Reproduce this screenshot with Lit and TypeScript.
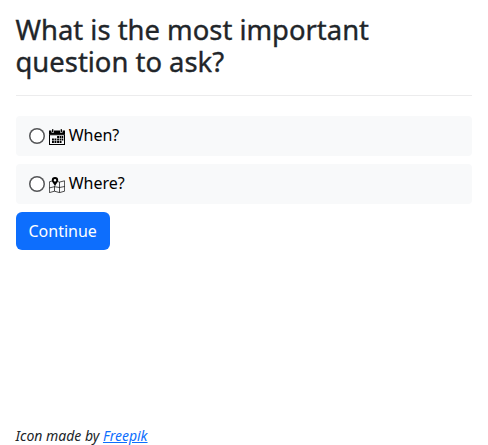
import { LitElement, html, css, svg } from "lit";
import { customElement } from "lit/decorators.js";

const calendar = svg`
  <path d="M0 1.6h2.4v1.2a1.3 1.3 0 0 0 2.6 0V1.6h6v1.2a1.3 1.3 0 0 0 2.6 0V1.6H16v4H0z"/>
  <rect x="3" y="0" width="1.4" height="3.5" rx=".7"/>
  <rect x="11.6" y="0" width="1.4" height="3.5" rx=".7"/>
  <path fill-rule="evenodd" d="M0 5.2h16V16H0zM1 6.3V15h14V6.3z"/>
  <path d="M8.1 7h1.9v1.9H8.1zM10.6 7h1.9v1.9h-1.9zM13 7h1.3v1.9H13zM3 9.5h1.9v1.9H3zM5.5 9.5h1.9v1.9H5.5zM8.1 9.5h1.9v1.9H8.1zM10.6 9.5h1.9v1.9h-1.9zM13 9.5h1.3v1.9H13zM3 12h1.9v1.9H3zM5.5 12h1.9v1.9H5.5zM8.1 12h1.9v1.9H8.1zM10.6 12h1.9v1.9h-1.9z"/>`;

const map = svg`
  <path fill-rule="evenodd" d="M6 0a3.2 3.2 0 0 1 3.2 3.2C9.2 5.2 7 6.8 6 9.2 5 6.8 2.8 5.2 2.8 3.2A3.2 3.2 0 0 1 6 0zM6 1.9a1.3 1.3 0 1 0 0 2.6 1.3 1.3 0 0 0 0-2.6z"/>
  <path fill="none" stroke="#000" stroke-width=".7" d="M3 4L.4 4.8v10.8L5.5 14.2l5 1.4 5.1-1.4V3.8l-5.1 1.3-1.6-.5M5.5 9.2v5M10.5 5.1v10.5M.4 10.9l5.1-1.2 5 .8 5.1-1"/>`;

@customElement("app-root")
export class AppRoot extends LitElement {
  static styles = css`
    :host {
      display: flex;
      flex-direction: column;
      box-sizing: border-box;
      height: 445px;
      padding: 14px 16px 0 15.5px;
      overflow: hidden;
      background: #fff;
      color: #212529;
      font: 400 16px/24px "Noto Sans", "Liberation Sans", sans-serif;
    }
    h1 {
      flex: none;
      margin: 0;
      font-size: 27.42px;
      font-weight: 400;
      line-height: 32px;
      -webkit-text-stroke: 0.35px #212529;
    }
    hr { flex: none; align-self: stretch; height: 1px; margin: 17px 0 20px; border: 0; background: #ececed; }
    form { flex: none; display: flex; flex-direction: column; align-items: flex-start; gap: 8px; }
    .option {
      display: flex;
      align-items: center;
      box-sizing: border-box;
      width: 100%;
      height: 40px;
      padding: 0 13px;
      border-radius: 4px;
      background: #f8f9fa;
      color: #000;
    }
    input {
      appearance: none;
      box-sizing: border-box;
      width: 16px;
      height: 16px;
      margin: 0 4px 0 0;
      border-radius: 50%;
      background: radial-gradient(circle, #fff 6.1px, #555658 6.8px);
    }
    input:checked { background: radial-gradient(circle, #fff 3px, #0d6efd 3.7px); }
    svg { width: 16px; height: 16px; margin: 2px 4.2px 0 0; }
    .option span { margin-top: -2px; }
    button {
      height: 38px;
      padding: 0 13px;
      border: 0;
      border-radius: 6px;
      background: #0d6efd;
      color: #fff;
      font: inherit;
    }
    footer { flex: none; margin-top: 175px; font-size: 14px; line-height: 21px; font-style: italic; }
    a { color: #0d6efd; }
  `;

  render() {
    return html`
      <h1>What is the most important question to ask?</h1>
      <hr />
      <form>
        <label class="option"><input type="radio" name="q" /><svg viewBox="0 0 16 16">${calendar}</svg><span>When?</span></label>
        <label class="option"><input type="radio" name="q" /><svg viewBox="0 0 16 16">${map}</svg><span>Where?</span></label>
        <button type="button">Continue</button>
      </form>
      <footer>Icon made by <a href="#">Freepik</a></footer>
    `;
  }
}
